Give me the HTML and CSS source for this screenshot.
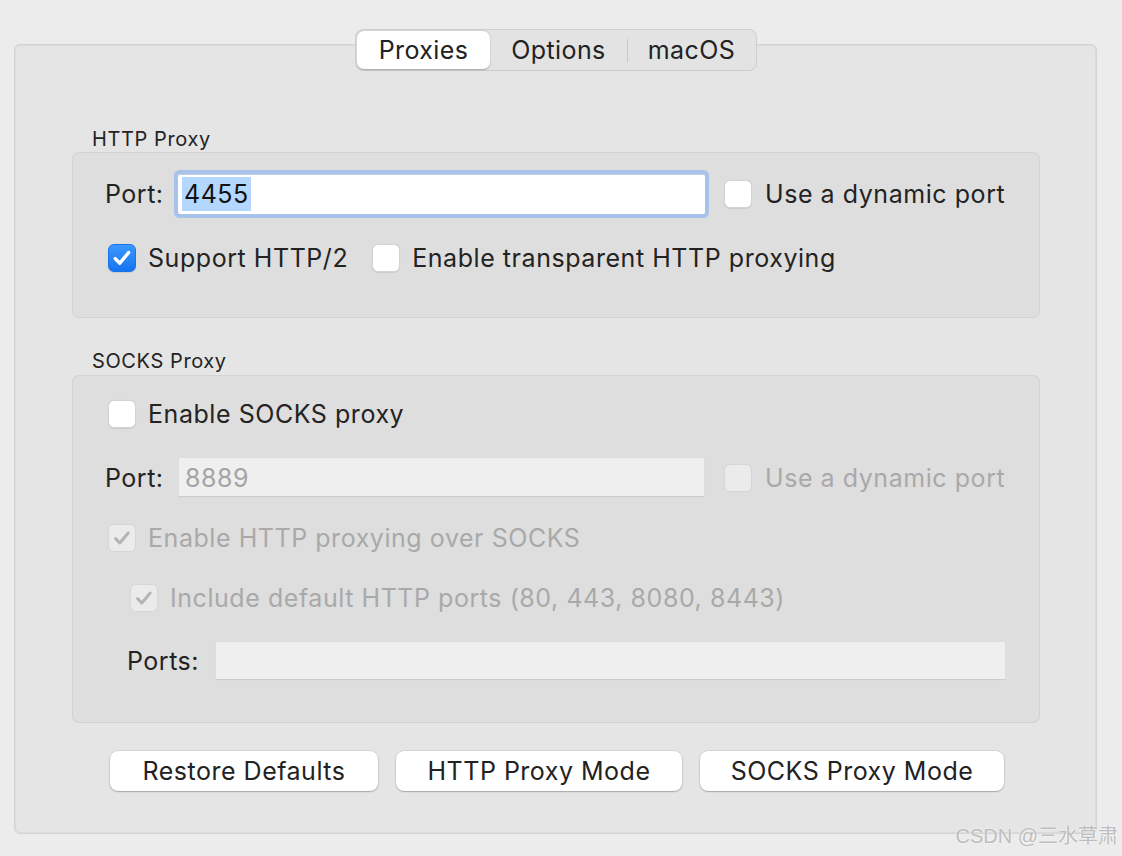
FILE: index.html
```html
<!DOCTYPE html>
<html>
<head>
<meta charset="utf-8">
<link rel="stylesheet" href="styles.css">
</head>
<body>
<div class="panel">
  <div class="tabs">
    <div class="tab tab-proxies selected">Proxies</div>
    <div class="tab tab-options">Options</div>
    <div class="tab-sep"></div>
    <div class="tab tab-macos">macOS</div>
  </div>

  <div class="section-title title-http">HTTP Proxy</div>
  <div class="group group-http">
    <div class="row row-port">
      <span class="lbl lbl-port">Port:</span>
      <div class="field field-focus"><span class="sel">4455</span></div>
      <label class="check check-dyn"><span class="box"></span><span class="txt">Use a dynamic port</span></label>
    </div>
    <div class="row row-opts">
      <label class="check check-first"><span class="box on"><svg viewBox="0 0 28 28" width="28" height="28"><path d="M7.2 14.6 L11.8 19.2 L20.6 8.6" /></svg></span><span class="txt">Support HTTP/2</span></label>
      <label class="check check-second"><span class="box"></span><span class="txt">Enable transparent HTTP proxying</span></label>
    </div>
  </div>

  <div class="section-title title-socks">SOCKS Proxy</div>
  <div class="group group-socks">
    <div class="row row-s1">
      <label class="check check-first"><span class="box"></span><span class="txt">Enable SOCKS proxy</span></label>
    </div>
    <div class="row row-s2">
      <span class="lbl lbl-port2">Port:</span>
      <div class="field field-dis field-port2"><span class="ph">8889</span></div>
      <label class="check check-dyn2 disabled"><span class="box"></span><span class="txt">Use a dynamic port</span></label>
    </div>
    <div class="row row-s3">
      <label class="check check-first disabled"><span class="box dis-on"><svg viewBox="0 0 28 28" width="28" height="28"><path d="M7.6 14.6 L11.8 19 L20.2 9" /></svg></span><span class="txt">Enable HTTP proxying over SOCKS</span></label>
    </div>
    <div class="row row-s4">
      <label class="check check-indent disabled"><span class="box dis-on"><svg viewBox="0 0 28 28" width="28" height="28"><path d="M7.6 14.6 L11.8 19 L20.2 9" /></svg></span><span class="txt">Include default HTTP ports (80, 443, 8080, 8443)</span></label>
    </div>
    <div class="row row-s5">
      <span class="lbl lbl-ports">Ports:</span>
      <div class="field field-dis field-ports"></div>
    </div>
  </div>

  <div class="buttons">
    <div class="btn btn-restore">Restore Defaults</div>
    <div class="btn btn-http">HTTP Proxy Mode</div>
    <div class="btn btn-socks">SOCKS Proxy Mode</div>
  </div>
</div>
<div class="watermark">CSDN @三水草肃</div>
</body>
</html>
```

FILE: styles.css
```css
html, body {
  margin: 0;
  padding: 0;
}
body {
  width: 1122px;
  height: 856px;
  overflow: hidden;
  position: relative;
  background: #ececec;
  font-family: Inter, "Liberation Sans", "Noto Sans CJK SC", sans-serif;
  color: #262626;
}
.panel {
  position: relative;
  margin: 44px 0 0 14px;
  width: 1083px;
  height: 790px;
  box-sizing: border-box;
  background: #e5e5e5;
  border: 1px solid #d3d3d3;
  box-shadow: inset 0 0 0 1px #dcdcdc;
  border-radius: 6px;
  padding: 82px 56px 0 57px;
}

/* segmented control */
.tabs {
  position: absolute;
  top: -16px;
  left: 340px;
  width: 402px;
  height: 42px;
  box-sizing: border-box;
  display: flex;
  align-items: center;
  padding: 1px;
  background: #e3e3e3;
  border: 1px solid #cdcdcd;
  border-radius: 8px;
}
.tab {
  height: 38px;
  line-height: 38px;
  text-align: center;
  font-size: 25px;
  letter-spacing: 0.4px;
  color: #222;
}
.tab-proxies { width: 133px; }
.tab-options { width: 137px; }
.tab-macos { width: 127px; }
.tab.selected {
  background: #ffffff;
  border-radius: 7px;
  box-shadow: 0 0.5px 1.5px rgba(0,0,0,0.28);
}
.tab-sep {
  width: 1px;
  height: 23px;
  background: #c9c9c9;
}

/* section titles */
.section-title {
  font-size: 20px;
  line-height: 24px;
  height: 24px;
  margin-left: 20px;
  letter-spacing: 0.6px;
  color: #232323;
}
.title-http { margin-bottom: 1px; }
.title-socks { margin-top: 31px; margin-bottom: 2px; }

/* group boxes */
.group {
  box-sizing: border-box;
  width: 968px;
  background: #dedede;
  border: 1px solid #d2d2d2;
  border-radius: 7px;
  padding-left: 32px;
}
.group-http { height: 166px; padding-top: 21px; }
.group-socks { height: 348px; padding-top: 24px; }

.row {
  display: flex;
  align-items: center;
}
.row-port { height: 40px; }
.row-opts { height: 28px; margin-top: 30px; }
.row-s1 { height: 28px; }
.row-s2 { height: 39px; margin-top: 30px; }
.row-s3 { height: 28px; margin-top: 27px; }
.row-s4 { height: 28px; margin-top: 32px; }
.row-s5 { height: 38px; margin-top: 30px; }

.lbl {
  font-size: 25px;
  line-height: 28px;
  letter-spacing: 0.5px;
  color: #232323;
}
.lbl-port { width: 73px; }
.lbl-port2 { width: 74px; }
.lbl-ports { width: 89px; margin-left: 22px; }

/* text fields */
.field {
  box-sizing: border-box;
  height: 100%;
  display: flex;
  align-items: center;
  font-size: 25px;
  letter-spacing: 0.5px;
}
.field-focus {
  width: 527px;
  background: #ffffff;
  border-radius: 2px;
  box-shadow: 0 0 0 4px #a8c3e9, inset 0 1px 0 #c4cfdd;
  padding-left: 4px;
}
.sel {
  background: #b3d7ff;
  color: #111;
  line-height: 34px;
  padding: 0 2px 0 2px;
}
.field-dis {
  background: #efefef;
  box-shadow: inset 0 -1px 0 #cbcbcb, 0 0 0 0.5px #d9d9d9;
}
.field-port2 { width: 525px; padding-left: 6px; }
.field-ports { width: 789px; }
.ph { color: #a3a3a3; }

/* checkboxes */
.check {
  display: inline-flex;
  align-items: center;
  gap: 12px;
  font-size: 25px;
  line-height: 28px;
  letter-spacing: 0.55px;
  color: #232323;
}
.check-first { margin-left: 3px; }
.check-second { margin-left: 24px; }
.check-indent { margin-left: 25px; }
.check-dyn { margin-left: 19px; gap: 13px; }
.check-dyn2 { margin-left: 20px; gap: 13px; }
.check.disabled { color: #a9a9a9; }
.box {
  box-sizing: border-box;
  width: 28px;
  height: 28px;
  flex: none;
  border-radius: 6px;
  background: #ffffff;
  border: 1px solid #d2d2d2;
  box-shadow: 0 0.5px 1px rgba(0,0,0,0.08);
  display: flex;
}
.box svg {
  margin: -1px;
}
.box svg path {
  fill: none;
  stroke-linecap: round;
  stroke-linejoin: round;
}
.box.on {
  background: linear-gradient(#3b98fd, #1673f0);
  border-color: #1a74e8;
}
.box.on svg path {
  stroke: #ffffff;
  stroke-width: 3.4;
}
.disabled .box {
  background: #ebebeb;
  border-color: #d6d6d6;
  box-shadow: none;
}
.disabled .box.dis-on svg path {
  stroke: #b4b4b4;
  stroke-width: 3;
}

/* buttons */
.buttons {
  display: flex;
  gap: 18px;
  margin-top: 28px;
  margin-left: 38px;
}
.btn {
  box-sizing: border-box;
  height: 40px;
  line-height: 40px;
  text-align: center;
  font-size: 25px;
  letter-spacing: 0.5px;
  color: #222;
  background: #ffffff;
  border-radius: 8px;
  box-shadow: 0 0 0 0.5px rgba(0,0,0,0.14), 0 1px 1.5px rgba(0,0,0,0.22);
}
.btn-restore { width: 268px; }
.btn-http { width: 286px; }
.btn-socks { width: 304px; }

.watermark {
  position: absolute;
  right: 4px;
  bottom: 8px;
  font-family: "Liberation Sans", "Noto Sans CJK SC", sans-serif;
  font-size: 20px;
  line-height: 24px;
  color: #bdbdbd;
  text-shadow: 0 0 2px #ffffff;
}
```
